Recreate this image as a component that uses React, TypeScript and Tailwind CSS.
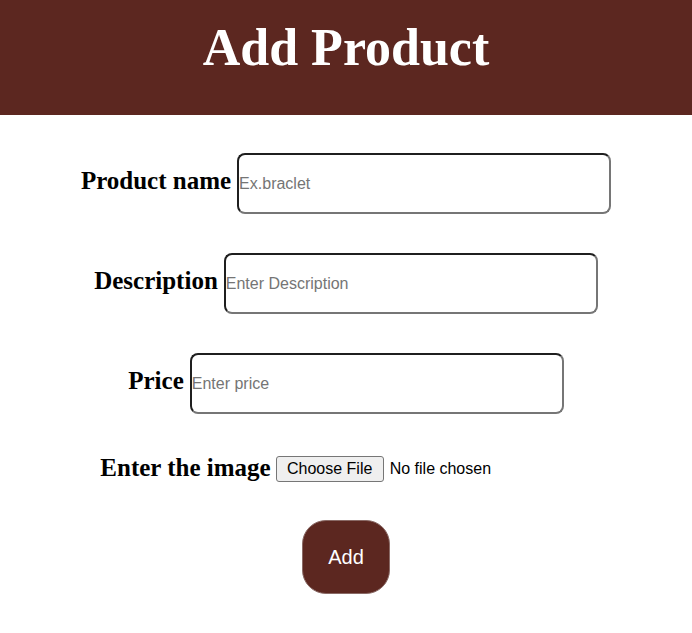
const serif = "font-['Liberation_Serif','Times_New_Roman',serif]";
const sans = "font-['Liberation_Sans',Arial,sans-serif]";

function Field(props: { label: string; placeholder: string }) {
  const { label, placeholder } = props;
  return (
    <div className="flex items-baseline justify-center gap-[6px]">
      <label className={`${serif} text-[25px] font-bold text-black`}>{label}</label>
      <input
        type="text"
        placeholder={placeholder}
        className={`${sans} w-[374px] h-[61px] px-0 text-[16px] text-black placeholder:text-[#757575] border-2 border-t-[#1f1f1f] border-l-[#1f1f1f] border-r-[#767676] border-b-[#767676] rounded-lg outline-none bg-white`}
      />
    </div>
  );
}

export default function App() {
  return (
    <div className="w-full min-h-screen bg-white">
      <header className="h-[115px] bg-[#5c2720] pt-[22px]">
        <h1 className={`${serif} text-center text-[52px] leading-none font-bold text-white`}>
          Add Product
        </h1>
      </header>
      <form className="flex flex-col items-center pt-[38px]">
        <div className="flex flex-col gap-[39px]">
          <Field label="Product name" placeholder="Ex.braclet" />
          <Field label="Description" placeholder="Enter Description" />
          <Field label="Price" placeholder="Enter price" />
        </div>
        <div className="mt-[40px] flex items-center justify-center gap-[5px] h-[30px]">
          <label className={`${serif} text-[25px] font-bold text-black -translate-y-[1px]`}>Enter the image</label>
          <div className={`${sans} w-[316px] flex items-center gap-[6px] text-[16px] text-black`}>
            <span className="h-[26px] w-[108px] flex items-center justify-center bg-[#efefef] border border-[#767676] rounded-[3px]">
              Choose File
            </span>
            <span>No file chosen</span>
          </div>
        </div>
        <button
          type="button"
          className={`${sans} mt-[36px] w-[88px] h-[74px] rounded-[24px] bg-[#5c2720] text-white text-[20px] border border-[#8a6a66]`}
        >
          Add
        </button>
      </form>
    </div>
  );
}
